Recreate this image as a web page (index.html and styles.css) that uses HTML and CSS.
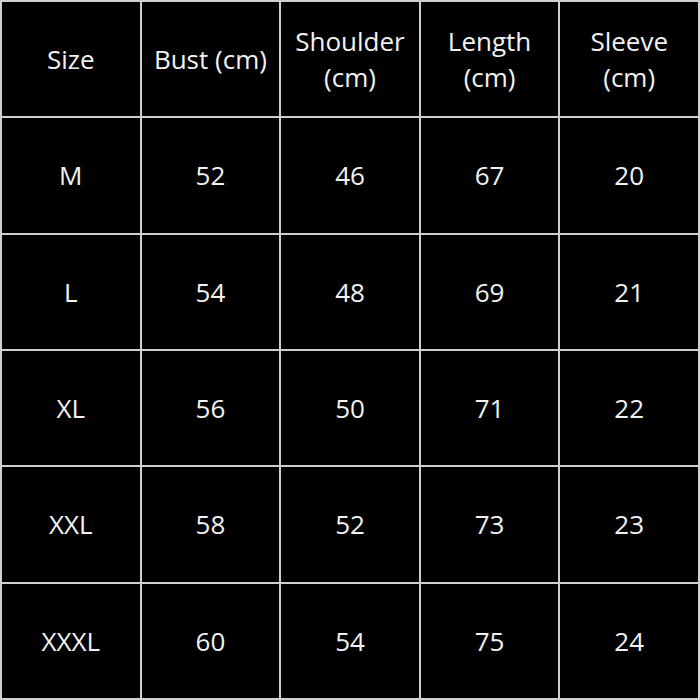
FILE: index.html
```html
<!DOCTYPE html>
<html>
<head>
<meta charset="utf-8">
<link rel="stylesheet" href="styles.css">
</head>
<body>
<div class="chart">
  <div class="cell">Size</div>
  <div class="cell">Bust (cm)</div>
  <div class="cell">Shoulder<br>(cm)</div>
  <div class="cell">Length<br>(cm)</div>
  <div class="cell">Sleeve<br>(cm)</div>

  <div class="cell">M</div><div class="cell">52</div><div class="cell">46</div><div class="cell">67</div><div class="cell">20</div>
  <div class="cell">L</div><div class="cell">54</div><div class="cell">48</div><div class="cell">69</div><div class="cell">21</div>
  <div class="cell">XL</div><div class="cell">56</div><div class="cell">50</div><div class="cell">71</div><div class="cell">22</div>
  <div class="cell">XXL</div><div class="cell">58</div><div class="cell">52</div><div class="cell">73</div><div class="cell">23</div>
  <div class="cell">XXXL</div><div class="cell">60</div><div class="cell">54</div><div class="cell">75</div><div class="cell">24</div>
</div>
</body>
</html>
```

FILE: styles.css
```css
html, body {
  margin: 0;
  padding: 0;
  background: #000;
}
.chart {
  width: 700px;
  height: 700px;
  box-sizing: border-box;
  display: grid;
  grid-template-columns: repeat(5, 1fr);
  grid-template-rows: repeat(6, 1fr);
  gap: 2px;
  padding: 2px;
  background: #cfcfcf;
}
.cell {
  background: #000;
  color: #f2f2f2;
  font-family: "Open Sans", sans-serif;
  font-size: 26px;
  line-height: 36px;
  display: flex;
  align-items: center;
  justify-content: center;
  text-align: center;
}
```
